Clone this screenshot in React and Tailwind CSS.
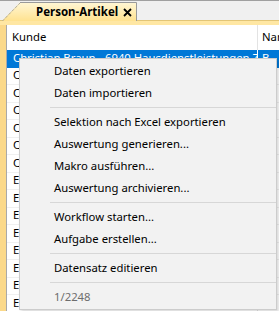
import React from "react";

const ROWS = [
  "Christian Braun - 6940 Hausdienstleistungen Zentrale",
  "Christa Meier",
  "Christoph Vogel",
  "Christine Schmitt",
  "Christian Lange",
  "Christa Berger",
  "Christof Hoffmann",
  "Elena Fischer",
  "Elias Wagner",
  "Elisabeth Schulz",
  "Elke Keller",
  "Elmar Richter",
  "Elsa Krüger",
  "Elli Wolf",
  "Elias Neumann",
];

const MENU = [
  { label: "Daten exportieren" },
  { label: "Daten importieren" },
  { sep: true },
  { label: "Selektion nach Excel exportieren" },
  { label: "Auswertung generieren..." },
  { label: "Makro ausführen..." },
  { label: "Auswertung archivieren..." },
  { sep: true },
  { label: "Workflow starten..." },
  { label: "Aufgabe erstellen..." },
  { sep: true },
  { label: "Datensatz editieren" },
  { sep: true },
  { label: "1/2248", muted: true },
];

function Tab() {
  return (
    <div className="relative ml-[2px] mt-[1px] h-[19px] w-[135px]">
      <div className="absolute inset-0 bg-gradient-to-b from-[#fff7d6] to-[#ffe28f] [clip-path:polygon(18px_0,100%_0,100%_100%,0_100%)]" />
      <svg className="absolute inset-0" width="135" height="19">
        <line x1="0.5" y1="19" x2="18.5" y2="0.5" stroke="#8a8a8a" strokeDasharray="1 1" />
        <line x1="18" y1="0.5" x2="134.5" y2="0.5" stroke="#9a9a9a" />
        <line x1="134.5" y1="0.5" x2="134.5" y2="19" stroke="#9a9a9a" />
      </svg>
      <div className="relative flex h-full items-center whitespace-nowrap pl-[34px] text-[11.5px] font-bold text-black">
        <span>Person-Artikel</span>
        <svg className="ml-[5px] mt-[1px]" width="9" height="9" viewBox="0 0 9 9">
          <path d="M1 1L8 8M8 1L1 8" stroke="#000" strokeWidth="1.8" />
        </svg>
      </div>
    </div>
  );
}

export default function App() {
  return (
    <div className="relative h-[311px] w-[279px] overflow-hidden bg-[#f0f0f0] font-['Noto_Sans','Liberation_Sans',sans-serif] text-[11.3px] text-black">
      <div className="flex h-[20px] border-t border-[#a0a0a0]">
        <Tab />
      </div>
      <div className="h-[5px] bg-[#ffe7a3] border-t border-[#e2c577]" />
      <div className="flex h-[286px]">
        <div className="w-[6px] shrink-0 bg-[#fbd98a]" />
        <div className="min-w-0 flex-1 overflow-hidden bg-white border-l border-[#a9a9a9]">
          <div className="flex h-[25px] items-center">
            <div className="w-[250px] shrink-0 pl-[5px]">Kunde</div>
            <div className="h-full w-px shrink-0 bg-[#e3e3e3]" />
            <div className="pl-[4px] whitespace-nowrap">Name</div>
          </div>
          {ROWS.map((name, i) => {
            const sel = i === 0;
            return (
              <div
                key={i}
                className={
                  sel
                    ? "flex h-[17.5px] items-center bg-[#0078d7] text-white"
                    : "flex h-[17.5px] items-center border-b border-[#f0f0f0]"
                }
              >
                <div className="w-[250px] shrink-0 overflow-hidden whitespace-nowrap pl-[6px]">{name}</div>
                <div className={sel ? "h-full w-px shrink-0 bg-white" : "h-full w-px shrink-0 bg-[#e3e3e3]"} />
                <div className="pl-[4px]">B</div>
              </div>
            );
          })}
        </div>
      </div>

      <div className="absolute left-[19px] top-[58px] w-[258px] border border-[#cccccc] bg-[#f2f2f2] py-[1px] shadow-[2px_2px_3px_rgba(0,0,0,0.15)]">
        {MENU.map((item, i) =>
          item.sep ? (
            <div key={i} className="flex h-[7px] items-center pl-[30px]">
              <div className="h-px flex-1 bg-[#d7d7d7]" />
            </div>
          ) : (
            <div
              key={i}
              className={
                item.muted
                  ? "flex h-[22px] items-center whitespace-nowrap pl-[34px] text-[#6d6d6d]"
                  : "flex h-[22px] items-center whitespace-nowrap pl-[34px]"
              }
            >
              {item.label}
            </div>
          )
        )}
      </div>
    </div>
  );
}
